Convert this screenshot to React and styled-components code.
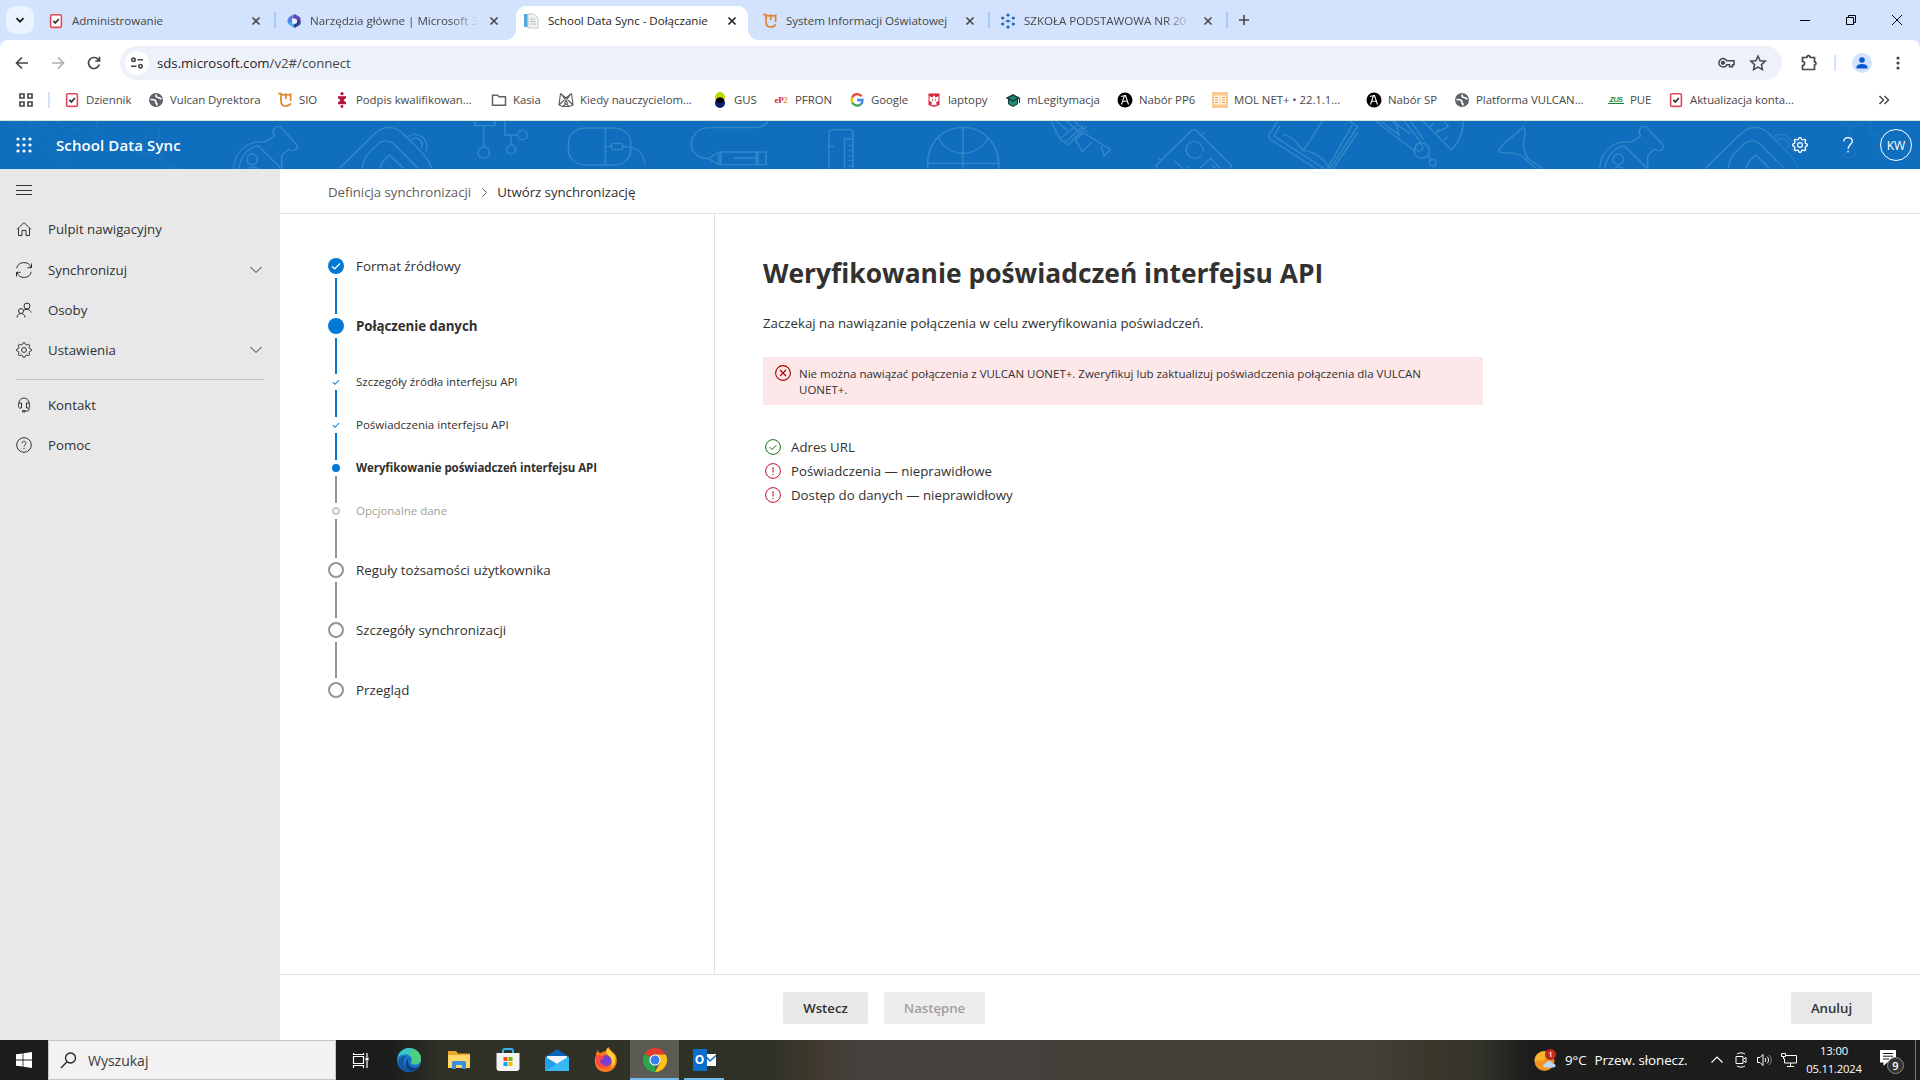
import styled, { createGlobalStyle } from "styled-components";

const GlobalStyle = createGlobalStyle`
  * {
    box-sizing: border-box;
  }
  body {
    margin: 0;
    background: #fff;
    overflow: hidden;
    font-family: "Segoe UI", "Open Sans", "Noto Sans", sans-serif;
    font-size: 13.25px;
    color: #323130;
  }
`;

const Screen = styled.div`
  width: 1920px;
  height: 1080px;
  display: flex;
  flex-direction: column;
`;

/* ---------- browser ---------- */

const TabStrip = styled.div`
  height: 40px;
  display: flex;
  align-items: center;
  background: #d3e3fd;
  padding-left: 6px;
`;

const TabSearch = styled.div`
  width: 28px;
  height: 28px;
  margin-right: 4px;
  border-radius: 10px;
  background: #ebf3fe;
  display: flex;
  align-items: center;
  justify-content: center;
`;

const Tab = styled.div`
  position: relative;
  width: 238px;
  height: 34px;
  margin-top: 6px;
  padding: 0 12px 5px 10px;
  display: flex;
  align-items: center;
  gap: 8px;
  font-size: 11.6px;
  color: ${(p) => (p.$active ? "#1f1f1f" : "#474747")};

  &::before {
    content: "";
    position: absolute;
    inset: 0 4px 0 2px;
    border-radius: 10px 10px 0 0;
    background: ${(p) => (p.$active ? "#fff" : "transparent")};
  }
  &::after {
    content: "";
    position: absolute;
    right: 0;
    top: 6px;
    width: 2px;
    height: 16px;
    background: ${(p) => (p.$divider ? "#a8c7fa" : "transparent")};
  }
  > * {
    position: relative;
  }
`;

/* concave foot of the active tab */
const TabFoot = styled.i`
  && {
    position: absolute;
  }
  bottom: 0;
  ${(p) => p.$side}: ${(p) => (p.$side === "left" ? "-8px" : "-6px")};
  width: 10px;
  height: 10px;
  background: radial-gradient(
    circle at ${(p) => (p.$side === "left" ? "0 0" : "100% 0")},
    transparent 9.5px,
    #fff 10px
  );
`;

const TabTitle = styled.span`
  flex: 1;
  overflow: hidden;
  white-space: nowrap;
  letter-spacing: -0.03px;
  ${(p) => p.$fade && "mask-image: linear-gradient(90deg, #000 84%, transparent 100%);"}
`;

const TabClose = styled.span`
  width: 16px;
  height: 16px;
  flex: none;
  display: flex;
  align-items: center;
  justify-content: center;
`;

const NewTab = styled.div`
  width: 32px;
  display: flex;
  justify-content: center;
`;

const WindowButtons = styled.div`
  margin-left: auto;
  display: flex;
`;

const WindowButton = styled.div`
  width: 46px;
  height: 34px;
  display: flex;
  align-items: center;
  justify-content: center;
`;

const ToolbarBack = styled.div`
  background: #d3e3fd;
`;

const Toolbar = styled.div`
  height: 46px;
  display: flex;
  align-items: center;
  background: #fff;
  border-radius: 8px 8px 0 0;
  padding: 0 4px;
`;

const ToolButton = styled.div`
  width: 36px;
  height: 34px;
  flex: none;
  display: flex;
  align-items: center;
  justify-content: center;
`;

const Omnibox = styled.div`
  width: 1662px;
  height: 34px;
  flex: none;
  margin: 0 9px 0 8px;
  border-radius: 17px;
  background: #edf1fa;
  display: flex;
  align-items: center;
  padding: 0 15px 0 5px;
`;

const SiteInfo = styled.div`
  width: 24px;
  height: 24px;
  border-radius: 50%;
  background: #fff;
  margin-right: 8px;
  display: flex;
  align-items: center;
  justify-content: center;
`;

const Url = styled.span`
  flex: 1;
  font-size: 13.2px;
  color: #474747;
  b {
    font-weight: 400;
    color: #1f1f1f;
  }
`;

const OmniActions = styled.div`
  display: flex;
  gap: 14px;
`;

const ToolDivider = styled.div`
  width: 2px;
  height: 16px;
  margin: 0 8px 0 7px;
  flex: none;
  background: #d3e3fd;
`;

const Profile = styled.div`
  width: 20px;
  height: 20px;
  margin: 0 8px;
  flex: none;
  border-radius: 50%;
  background: #d3e3fd;
  display: flex;
  align-items: center;
  justify-content: center;
`;

const BookmarkBar = styled.div`
  height: 35px;
  display: flex;
  align-items: center;
  padding: 0 0 7px 18px;
  background: #fff;
  border-bottom: 1px solid #d9dfd9;
  font-size: 11.4px;
  color: #474747;
  > * {
    flex: none;
  }
`;

const BookmarkDivider = styled.div`
  width: 2px;
  height: 16px;
  margin: 0 14px;
  background: #d3e3fd;
`;

const Bookmark = styled.div`
  width: ${(p) => p.$width}px;
  display: flex;
  align-items: center;
  gap: 6px;
  white-space: nowrap;
  letter-spacing: -0.04px;
  svg {
    flex: none;
  }
`;

/* ---------- application ---------- */

const SuiteHeader = styled.header`
  position: relative;
  height: 48px;
  display: flex;
  align-items: center;
  background: #0f6fbe;
  color: #fff;
`;

const PatternLayer = styled.svg`
  position: absolute;
  inset: 0;
`;

const Waffle = styled.div`
  position: relative;
  width: 48px;
  display: flex;
  justify-content: center;
`;

const SuiteTitle = styled.div`
  position: relative;
  flex: 1;
  padding-left: 8px;
  font-size: 15px;
  font-weight: 600;
  letter-spacing: 0.1px;
`;

const HeaderButton = styled.div`
  position: relative;
  width: 48px;
  display: flex;
  justify-content: center;
`;

const Avatar = styled.div`
  width: 32px;
  height: 32px;
  border: 1px solid #fff;
  border-radius: 50%;
  display: flex;
  align-items: center;
  justify-content: center;
  font-size: 12.2px;
  font-weight: 500;
`;

const Workspace = styled.div`
  height: 871px;
  display: flex;
`;

const Sidebar = styled.nav`
  width: 280px;
  background: #e8e8e8;
`;

const NavItem = styled.div`
  height: ${(p) => p.$height || 40}px;
  display: flex;
  align-items: center;
  gap: 16px;
  padding: 0 18px 0 16px;
  svg {
    flex: none;
  }
`;

const NavLabel = styled.span`
  flex: 1;
`;

const NavDivider = styled.div`
  height: 1px;
  margin: 9px 16px 5px;
  background: #c8c6c4;
`;

const Main = styled.main`
  flex: 1;
  display: flex;
  flex-direction: column;
`;

const Breadcrumb = styled.div`
  height: 45px;
  display: flex;
  align-items: center;
  gap: 8.5px;
  padding: 2px 0 0 48px;
  border-bottom: 1px solid #e1e1e1;
  color: #605e5c;
  letter-spacing: -0.03px;
  strong {
    font-weight: 400;
    color: #323130;
  }
`;

const Wizard = styled.div`
  flex: 1;
  display: flex;
`;

const Stepper = styled.div`
  width: 435px;
  padding: 44px 0 0 48px;
  border-right: 1px solid #e1e1e1;
`;

const Step = styled.div`
  display: flex;
  gap: 12px;
`;

const Rail = styled.div`
  width: 16px;
  display: flex;
  flex-direction: column;
  align-items: center;
`;

const Mark = styled.div`
  width: ${(p) => (p.$sub ? 8 : 16)}px;
  height: ${(p) => (p.$sub ? 8 : 16)}px;
  border-radius: 50%;
  display: flex;
  align-items: center;
  justify-content: center;
  background: ${(p) => (p.$state === "current" || (p.$state === "done" && !p.$sub) ? "#0078d4" : "transparent")};
  border: ${(p) => (p.$state === "todo" ? (p.$sub ? "2px solid #c8c8c8" : "2px solid #979593") : "none")};
  svg {
    flex: none;
  }
`;

const Connector = styled.div`
  width: 2px;
  height: ${(p) => p.$length}px;
  margin: 4px 0;
  background: ${(p) => (p.$done ? "#0078d4" : "#979593")};
`;

const StepLabel = styled.div`
  height: ${(p) => (p.$sub ? 6 : 16)}px;
  display: flex;
  align-items: center;
  white-space: nowrap;
  font-size: ${(p) => (p.$sub ? "11.5px" : "13.35px")};
  font-weight: ${(p) => (p.$bold ? 700 : 400)};
  letter-spacing: ${(p) => (p.$bold ? "-0.08px" : "0")};
  color: ${(p) => (p.$muted ? "#a19f9d" : "#323130")};
`;

const Content = styled.section`
  flex: 1;
  padding: 40px 0 0 48px;
`;

const Heading = styled.h1`
  margin: 0;
  font-size: 26.4px;
  line-height: 38px;
  font-weight: 700;
`;

const Lead = styled.p`
  margin: 21px 0 0;
  line-height: 20px;
`;

const ErrorBar = styled.div`
  width: 720px;
  height: 48px;
  margin-top: 24px;
  padding: 8px 50px 0 12px;
  display: flex;
  gap: 8px;
  background: #fde7e9;
  font-size: 11.5px;
  line-height: 16px;
  svg {
    flex: none;
  }
`;

const ErrorText = styled.span`
  padding-top: 1px;
`;

const CheckList = styled.ul`
  list-style: none;
  margin: 30px 0 0;
  padding: 0 0 0 2px;
`;

const CheckItem = styled.li`
  height: 24px;
  display: flex;
  align-items: center;
  gap: 10px;
`;

const Footer = styled.footer`
  height: 66px;
  display: flex;
  align-items: center;
  gap: 16px;
  padding: 0 48px 0 503px;
  border-top: 1px solid #e1e1e1;
`;

const Button = styled.button`
  width: ${(p) => p.$width}px;
  height: 32px;
  padding: 0;
  border: 0;
  border-radius: 2px;
  background: ${(p) => (p.disabled ? "#ededed" : "#e8e8e8")};
  color: ${(p) => (p.disabled ? "#a19f9d" : "#323130")};
  font-family: inherit;
  font-size: 13.2px;
  font-weight: 600;
  margin-left: ${(p) => (p.$end ? "auto" : "0")};
`;

/* ---------- taskbar ---------- */

const Taskbar = styled.div`
  height: 40px;
  display: flex;
  background: linear-gradient(
    90deg,
    #1c1c1c 0,
    #1c1c1c 390px,
    #303226 445px,
    #2f3126 770px,
    #3e382d 810px,
    #46403c 850px,
    #48423e 950px,
    #443f39 1100px,
    #453f3a 1370px,
    #3c372b 1430px,
    #34332a 1480px,
    #1d1d1c 1525px,
    #1c1c1c 1920px
  );
  color: #fff;
`;

const StartButton = styled.div`
  width: 48px;
  display: flex;
  align-items: center;
  justify-content: center;
`;

const SearchBox = styled.div`
  width: 288px;
  border: 1px solid #c4c4c4;
  background: #f2f2f2;
  display: flex;
  align-items: center;
  gap: 11px;
  padding-left: 11px;
  font-size: 14px;
  color: #3b3b3b;
`;

const TaskButton = styled.div`
  width: ${(p) => p.$width || 49}px;
  display: flex;
  align-items: center;
  justify-content: center;
  background: ${(p) => (p.$active ? "#5b5b54" : "transparent")};
  box-shadow: ${(p) => (p.$open ? "inset 0 -2px 0 #76b9ed" : "none")};
`;

const Tray = styled.div`
  margin-left: auto;
  display: flex;
  align-items: center;
`;

const Weather = styled.div`
  display: flex;
  align-items: center;
  gap: 8px;
  width: 171px;
  font-size: 13.4px;
  white-space: nowrap;
  letter-spacing: -0.1px;
`;

const TrayIcon = styled.div`
  width: 24px;
  display: flex;
  justify-content: center;
`;

const Clock = styled.div`
  width: 66px;
  text-align: center;
  font-size: 11.3px;
  line-height: 18px;
  letter-spacing: -0.2px;
`;

const Notifications = styled.div`
  position: relative;
  width: 48px;
  padding-left: 13px;
`;

const Badge = styled.span`
  position: absolute;
  left: 20px;
  top: 7px;
  width: 17px;
  height: 17px;
  border: 1px solid #8a8a8a;
  border-radius: 50%;
  background: #333;
  font-size: 11px;
  line-height: 15px;
  font-weight: 600;
  text-align: center;
`;

const ShowDesktop = styled.div`
  width: 5px;
  height: 40px;
  border-left: 1px solid #7a7a7a;
`;

/* ---------- icons ---------- */

const Line = ({ size = 16, box = 16, w = 1, color = "currentColor", children }) => (
  <svg width={size} height={size} viewBox={`0 0 ${box} ${box}`} fill="none" stroke={color} strokeWidth={w}>
    {children}
  </svg>
);

const Cross = ({ color = "#474747" }) => (
  <Line w={1.6} color={color}>
    <path d="M4.5 4.500l7 7M11.500 4.500l-7 7" />
  </Line>
);

const DziennikIcon = () => (
  <Line>
    <rect x="2.600" y="1.800" width="10.800" height="12.600" rx="1.500" fill="#fff" stroke="#e04a59" strokeWidth="1.600" />
    <path d="M5.400 7.800l2 2.200 3.400-4" stroke="#333" strokeWidth="1.800" />
  </Line>
);

const SioIcon = () => (
  <Line w={1.7} color="#e0842a">
    <path d="M1.300 1.700H4V9c0 3.300 1.600 5 4.700 5 2.500 0 4.200-.8 5-2.600M4 2.200c1.800 1 3.200.9 4.800 0 1.700.9 3.200.9 4.800 0V9M8.800 2.200V7" />
  </Line>
);

const GlobeIcon = () => (
  <Line>
    <circle cx="8" cy="8" r="7" fill="#5f6368" stroke="none" />
    <path d="M2.500 7.500c2.500 0 4 0 5 1s-.5 2 .5 2.500 1.500 1 .5 2.500M8.500 2.500c-1 2 0 3 1.500 3s2 1.200 3.500 1.500" stroke="#fff" strokeWidth="1.700" />
  </Line>
);

const M365Icon = () => (
  <svg width="16" height="16" viewBox="0 0 16 16">
    <path d="M8.500 1L4 3.500C2.500 4.500 1.500 6 1.500 8s1 3 2 3.500L6 10V5.500z" fill="#5a7fe8" />
    <path d="M8.500 1l4.500 2.500c1 .6 1.500 1.500 1.500 2.500v3L11 7 8 5.500 6 5.500z" fill="#6a45b8" />
    <path d="M14.500 8v2c0 1-.5 1.800-1.300 2.300L8.500 15 3.500 12c-1-.8-1.500-2-1.500-3l4 1.500h3z" fill="#3fb4e8" />
    <path d="M14.500 8v2c0 1-.5 1.800-1.300 2.300L8.500 15l-1-3 3.500-2V6z" fill="#3a3f8f" />
    <path d="M6 6l2.500-.8L11 7v2.500L8.500 11 6 9.700z" fill="#e4ebfb" />
  </svg>
);

const SdsIcon = () => (
  <svg width="16" height="16" viewBox="0 0 16 16">
    <path d="M4 1h6l4 4v10H4z" fill="#f1f3f4" stroke="#c3c9cc" />
    <path d="M6 6h5M6 8.500h6M6 11h6" stroke="#b9c0c4" />
    <rect x="0" y="1" width="3.500" height="13" fill="#55a7dc" />
  </svg>
);

const DotsIcon = () => (
  <svg width="16" height="16" viewBox="0 0 16 16" fill="#1b65b5">
    {[[8, 2], [8, 8], [8, 14], [2.700, 5], [13.300, 5], [2.700, 11], [13.300, 11], [5.300, 8], [10.700, 8]].map(([x, y], i) => (
      <circle key={i} cx={x} cy={y} r={i > 6 ? 0.6 : 1.6} />
    ))}
  </svg>
);

const PodpisIcon = () => (
  <svg width="16" height="16" viewBox="0 0 16 16" fill="#b5123b">
    <circle cx="8" cy="1.700" r="1.600" />
    <path d="M4 4.200h8V6L9.500 8.300 12 10.500v1.700H4v-1.700l2.500-2.200L4 6z" />
    <circle cx="8" cy="14.500" r="1.400" />
  </svg>
);

const FolderIcon = () => (
  <Line w={1.5} color="#5f6368">
    <path d="M1.500 3.200h5l1.500 1.600h6.500v8.500h-13z" />
  </Line>
);

const OwlIcon = () => (
  <Line w={1.1} color="#555">
    <path d="M2.500 1.500L8 6l5.500-4.500M2.500 1.500L1 13l3.500 1.500h7L15 13 13.500 1.500M1 13L8 6l7 7M4 3l6 8.500M12 3l-6 8.500M5 14.500l3-3 3 3" />
  </Line>
);

const GusIcon = () => (
  <svg width="16" height="16" viewBox="0 0 16 16">
    <circle cx="8" cy="5" r="5" fill="#c5d800" />
    <circle cx="8" cy="11" r="5" fill="#0b1f6f" />
    <path d="M3.500 8a5 5 0 0 1 9 0 5 5 0 0 1-9 0z" fill="#000" />
  </svg>
);

const GoogleIcon = () => (
  <svg width="16" height="16" viewBox="0 0 16 16" fill="none" strokeWidth="2.300">
    <path d="M12.600 4.200A5.500 5.500 0 0 0 3.200 5.500" stroke="#ea4335" />
    <path d="M3.200 5.500a5.500 5.500 0 0 0 0 5" stroke="#fbbc05" />
    <path d="M3.200 10.500a5.500 5.500 0 0 0 8.500 1.800" stroke="#34a853" />
    <path d="M8 8h5.500a5.500 5.500 0 0 1-1.800 4.300" stroke="#4285f4" />
  </svg>
);

const EagleIcon = () => (
  <svg width="16" height="16" viewBox="0 0 16 16">
    <path d="M2.500 1.500h11V13L8 15l-5.500-2z" fill="#d8213b" />
    <path d="M3.500 4L6.500 5.500 8 3l1.500 2.500 3-1.500v5L10 10.500l1 2-3 1-3-1 1-2L3.500 9z" fill="#fff" />
    <path d="M6.500 7v2M9.500 7v2" stroke="#d8213b" strokeWidth=".7" />
  </svg>
);

const CapIcon = () => (
  <svg width="16" height="16" viewBox="0 0 16 16">
    <path d="M3.500 7h9v5L8 14.500 3.500 12z" fill="#1f8f79" stroke="#12332e" />
    <path d="M8 2l7.500 4L8 10 .5 6z" fill="#16423b" />
    <path d="M4 6l4-2 4 2-4 2z" fill="#1f8f79" />
    <path d="M14.500 6v5" stroke="#12332e" />
  </svg>
);

const NaborIcon = () => (
  <svg width="16" height="16" viewBox="0 0 16 16">
    <circle cx="8" cy="8" r="7.500" fill="#000" />
    <path d="M4.500 12.500l3-9h1l3 9M6 9.200h4M4 4.500l3.500-1" fill="none" stroke="#fff" strokeWidth="1.100" />
  </svg>
);

const MolIcon = () => (
  <svg width="16" height="16" viewBox="0 0 16 16">
    <rect width="16" height="16" fill="#f8c88c" />
    <path d="M2 3.500h5.500v9H2zM8.500 3.500H14v9H8.500z" fill="#fff7ea" />
    <path d="M3 5.500h3M3 8h3M3 10.500h3M10 5.500h3M10 8h3M10 10.500h3" stroke="#e19a4e" />
  </svg>
);

const MiniText = styled.span`
  width: 16px;
  text-align: center;
  font: ${(p) => (p.$serif ? 'bold 9px "Liberation Serif", serif' : 'italic bold 7px "Liberation Sans", sans-serif')};
  letter-spacing: -0.4px;
  color: ${(p) => p.$color};
  border-bottom: ${(p) => (p.$serif ? "0" : "1px solid #0a8a3a")};
  i {
    font-style: normal;
    color: #f0932b;
  }
`;

const GearIcon = ({ size = 16, w = 1 }) => {
  const pts = [];
  for (let i = 0; i < 32; i++) {
    const r = i % 4 < 2 ? 7.4 : 5.7;
    const a = ((i - 0.5) / 32) * Math.PI * 2;
    pts.push(`${(8 + r * Math.cos(a)).toFixed(2)},${(8 + r * Math.sin(a)).toFixed(2)}`);
  }
  return (
    <Line size={size} w={w}>
      <polygon points={pts.join(" ")} strokeLinejoin="round" />
      <circle cx="8" cy="8" r="2.400" />
    </Line>
  );
};

const Chevron = () => (
  <Line size={12} box={12}>
    <path d="M.5 3l5.500 5.500L11.500 3" />
  </Line>
);

const HomeIcon = () => (
  <Line>
    <path d="M1 8.500L8 1.500l7 7M2.500 7.200v7.300h3.500V9.500h4v5h3.500V7.200" />
  </Line>
);

const SyncIcon = () => (
  <Line>
    <path d="M.7 6.200A7.500 7.500 0 0 1 15 5.500M15.500 1.500v4.200h-4M15.300 9.800A7.500 7.500 0 0 1 1 10.500M.5 14.500v-4.200h4" />
  </Line>
);

const PeopleIcon = () => (
  <Line>
    <circle cx="11" cy="4" r="3" />
    <path d="M8 8.200c2.500-1.800 6-.8 7.200 2.300" />
    <circle cx="5" cy="9" r="2.500" />
    <path d="M1 15.500c.3-5.300 7.700-5.300 8 0" />
  </Line>
);

const HeadsetIcon = () => (
  <Line>
    <path d="M3 7V6a5 5 0 0 1 10 0v1M3.500 6h2v5h-2C2 11 2 6 3.500 6zM12.500 6h-2v5h2c1.500 0 1.500-5 0-5zM13 10.500v2c0 1-.5 1.500-1.500 1.500H9" />
    <path d="M6.500 13.500h2.500v1.500H6.500z" />
  </Line>
);

const HelpIcon = () => (
  <Line>
    <circle cx="8" cy="8" r="7.300" />
    <path d="M6 6.300c0-2.600 4-2.600 4 0 0 1.500-2 1.700-2 3.300M8 11v1.200" />
  </Line>
);

const CheckMark = ({ color, size = 10 }) => (
  <Line size={size} box={10} w={1.3} color={color}>
    <path d="M1 5.200l2.700 2.700L9 2.500" />
  </Line>
);

const StatusIcon = ({ ok }) => (
  <Line color={ok ? "#0e700e" : "#c50f1f"}>
    <circle cx="8" cy="8" r="7.400" />
    {ok ? <path d="M4.800 8.200l2.300 2.300 4.200-4.300" /> : <path d="M8 4v5.500M8 10.800v1.300" />}
  </Line>
);

const ErrorIcon = () => (
  <Line color="#a80000" w={1.1}>
    <circle cx="8" cy="8" r="7.400" />
    <path d="M5 5l6 6M11 5l-6 6" />
  </Line>
);

/* school doodles repeated along the header, one tile is 1366px wide */
const Doodles = () => (
  <>
    <g transform="translate(0 -11) scale(.4082 .3333)">
      <path d="M572 177C575 120 610 90 648 97L673 78C662 58 680 40 690 55L728 105C730 122 718 126 706 118L690 137V177M585 177C590 130 615 110 633 108L690 177" />
      <ellipse cx="618" cy="148" rx="13" ry="16" />
      <path d="M608 177c5-8 18-8 24 0" />
      <path d="M830 177L915 75C940 45 965 45 988 72C1010 100 1050 140 1058 177M888 177C888 150 895 135 930 98C945 88 958 93 968 105L1025 177M932 177C930 160 945 145 955 135L990 177M1000 80C1020 60 1055 85 1043 127M1008 90C1020 75 1042 95 1032 115" />
      <path d="M1163 33V47H1212V33M1185 47V110M1237 33V75H1268M1252 75V104" />
      <ellipse cx="1185" cy="128" rx="14" ry="17" />
      <ellipse cx="1280" cy="75" rx="12" ry="14" />
      <ellipse cx="1252" cy="118" rx="11" ry="13" />
      <rect x="1393" y="54" width="152" height="111" rx="42" />
      <path d="M1483 54V165M1483 110H1498M1525 110C1555 108 1575 125 1580 160" />
      <rect x="1498" y="100" width="27" height="19" rx="5" />
    </g>
    <g transform="translate(640 -11) scale(.4082 .3333)">
      <path d="M314 33C310 45 295 53 280 53H165C115 60 110 145 168 146L193 126V164L168 146M198 126H285V164H198zM289 126H309V164H289zM230 144H285" />
      <path d="M463 177V68Q463 59 471 59H514Q522 59 522 68V177M501 177V87H522M463 109H475M511 106H522M511 121H522M511 137H522M511 152H522M511 168H522" />
      <path d="M705 177C700 100 740 52 791 52S882 100 879 177M791 52V177M705 160H879M731 84C760 145 822 145 853 84" />
      <path d="M1007 33C1012 55 1025 60 1018 70C1030 75 1025 85 1032 92C1045 90 1040 105 1048 105L1095 48M1020 33L1048 62M1045 33L1075 66M1064 33L1096 66M1030 85L1075 40M1040 98L1086 48M1066 90L1084 124L1108 96M1066 90L1086 68L1152 118L1137 138L1130 108" />
      <path d="M1265 177V165L1350 63Q1357 55 1364 63L1448 165V177M1268 142L1277 152M1383 67L1373 79M1308 152L1331 177M1340 177L1345 170M1370 177L1398 145L1422 177M1400 165L1412 177" />
      <path d="M1375 137C1355 160 1330 130 1340 108C1348 88 1375 88 1381 125" />
      <path d="M1563 33L1540 76Q1540 85 1546 90L1680 195M1568 48L1553 78L1700 195M1575 75C1605 80 1610 105 1625 122M1672 33L1625 122C1650 122 1680 150 1690 177M1738 33L1758 50L1690 177M1745 45L1683 177M1758 68L1698 177" />
      <path d="M1802 33L1900 125M1815 33L1860 76L1850 33M1842 33L1888 72M1872 33L1915 100M1888 33L1920 90" />
      <ellipse cx="1915" cy="122" rx="19" ry="23" />
      <ellipse cx="1908" cy="112" rx="9" ry="12" />
      <ellipse cx="1942" cy="158" rx="8" ry="10" />
      <path d="M1930 137L1938 149M1918 33L1987 120C2008 95 2018 60 2016 33M1935 50L1945 40M1950 68L1958 58M1950 68L1980 50L1970 33M1970 90L1978 80" />
      <path d="M2103 125C2100 110 2160 60 2163 52C2180 65 2150 100 2175 145L2212 177M2103 125C2130 135 2150 120 2170 150L2196 177M2175 145L2168 150" />
    </g>
  </>
);

const HeaderPattern = () => (
  <PatternLayer width="1920" height="48" viewBox="0 0 1920 48" fill="none" stroke="#398bcb">
    <defs>
      <linearGradient id="fade" x1="0" x2="1920" gradientUnits="userSpaceOnUse">
        <stop offset="0" stopColor="#fff" stopOpacity=".12" />
        <stop offset=".1" stopColor="#fff" stopOpacity=".2" />
        <stop offset=".13" stopColor="#fff" stopOpacity=".85" />
        <stop offset=".92" stopColor="#fff" stopOpacity=".85" />
        <stop offset=".94" stopColor="#fff" stopOpacity=".2" />
        <stop offset="1" stopColor="#fff" stopOpacity=".1" />
      </linearGradient>
      <mask id="edges" maskUnits="userSpaceOnUse" x="0" y="0" width="1920" height="48">
        <rect width="1920" height="48" fill="url(#fade)" />
      </mask>
    </defs>
    <g mask="url(#edges)" strokeWidth="3.800">
      <g transform="translate(-1366 0)"><Doodles /></g>
      <Doodles />
      <g transform="translate(1366 0)"><Doodles /></g>
    </g>
  </PatternLayer>
);

/* ---------- data ---------- */

const tabs = [
  { title: "Administrowanie", icon: <DziennikIcon />, divider: true },
  { title: "Narzędzia główne | Microsoft 365", icon: <M365Icon />, fade: true },
  { title: "School Data Sync - Dołączanie", icon: <SdsIcon />, active: true },
  { title: "System Informacji Oświatowej", icon: <SioIcon />, divider: true },
  { title: "SZKOŁA PODSTAWOWA NR 20", icon: <DotsIcon />, fade: true, divider: true },
];

const bookmarks = [
  { label: "Dziennik", icon: <DziennikIcon />, width: 84 },
  { label: "Vulcan Dyrektora", icon: <GlobeIcon />, width: 129 },
  { label: "SIO", icon: <SioIcon />, width: 57 },
  { label: "Podpis kwalifikowan...", icon: <PodpisIcon />, width: 157 },
  { label: "Kasia", icon: <FolderIcon />, width: 67 },
  { label: "Kiedy nauczycielom...", icon: <OwlIcon />, width: 154 },
  { label: "GUS", icon: <GusIcon />, width: 61 },
  { label: "PFRON", icon: <MiniText $serif $color="#d8262c">eP<i>2</i></MiniText>, width: 76 },
  { label: "Google", icon: <GoogleIcon />, width: 77 },
  { label: "laptopy", icon: <EagleIcon />, width: 79 },
  { label: "mLegitymacja", icon: <CapIcon />, width: 112 },
  { label: "Nabór PP6", icon: <NaborIcon />, width: 95 },
  { label: "MOL NET+ • 22.1.1...", icon: <MolIcon />, width: 154 },
  { label: "Nabór SP", icon: <NaborIcon />, width: 88 },
  { label: "Platforma VULCAN...", icon: <GlobeIcon />, width: 154 },
  { label: "PUE", icon: <MiniText $color="#0a8a3a">ZUS</MiniText>, width: 60 },
  { label: "Aktualizacja konta...", icon: <DziennikIcon />, width: 210 },
];

const steps = [
  { label: "Format źródłowy", state: "done", length: 36, done: true },
  { label: "Połączenie danych", state: "current", length: 36, done: true },
  { label: "Szczegóły źródła interfejsu API", state: "done", sub: true, length: 27, done: true },
  { label: "Poświadczenia interfejsu API", state: "done", sub: true, length: 27, done: true },
  { label: "Weryfikowanie poświadczeń interfejsu API", state: "current", sub: true, length: 27 },
  { label: "Opcjonalne dane", state: "todo", sub: true, muted: true, length: 39 },
  { label: "Reguły tożsamości użytkownika", state: "todo", length: 36 },
  { label: "Szczegóły synchronizacji", state: "todo", length: 36 },
  { label: "Przegląd", state: "todo" },
];

/* ---------- sections ---------- */

const Browser = () => (
  <>
    <TabStrip>
      <TabSearch>
        <Line size={10} box={10} w={1.8} color="#1f1f1f"><path d="M1.500 3.200L5 6.700l3.500-3.500" /></Line>
      </TabSearch>
      {tabs.map((t) => (
        <Tab key={t.title} $active={t.active} $divider={t.divider}>
          {t.active && <TabFoot $side="left" />}
          {t.active && <TabFoot $side="right" />}
          {t.icon}
          <TabTitle $fade={t.fade}>{t.title}</TabTitle>
          <TabClose><Cross color={t.active ? "#1f1f1f" : "#474747"} /></TabClose>
        </Tab>
      ))}
      <NewTab>
        <Line w={1.6} color="#474747"><path d="M3 8h10M8 3v10" /></Line>
      </NewTab>
      <WindowButtons>
        <WindowButton><Line size={10} box={10} color="#000"><path d="M0 5.500h10" /></Line></WindowButton>
        <WindowButton>
          <Line size={10} box={10} color="#000"><path d="M.5 2.500h7v7h-7zM2.500 2.500v-2h7v7h-2" /></Line>
        </WindowButton>
        <WindowButton><Line size={10} box={10} color="#000"><path d="M0 0l10 10M10 0L0 10" /></Line></WindowButton>
      </WindowButtons>
    </TabStrip>
    <ToolbarBack>
      <Toolbar>
        <ToolButton><Line w={1.7} color="#474747"><path d="M14 8H3M8 2.500L2.500 8 8 13.500" /></Line></ToolButton>
        <ToolButton><Line w={1.7} color="#b0b0b0"><path d="M2 8h11M8 2.500L13.500 8 8 13.500" /></Line></ToolButton>
        <ToolButton>
          <Line w={1.7} color="#474747"><path d="M13.300 9.500A5.500 5.500 0 1 1 12 4.200L13 5.500M13.500 1.800v4.200H9.300" /></Line>
        </ToolButton>
        <Omnibox>
          <SiteInfo>
            <Line w={1.6} color="#474747">
              <circle cx="4.500" cy="4.800" r="1.700" /><path d="M8.500 4.800H14M2 11.200h5.500" /><circle cx="11.500" cy="11.200" r="1.700" />
            </Line>
          </SiteInfo>
          <Url><b>sds.microsoft.com</b>/v2#/connect</Url>
          <OmniActions>
            <Line size={18} box={18} w={1.5} color="#474747">
              <path d="M9.800 6.800H17v4h-1.500v2h-3v-2H9.800a4.200 4.200 0 1 1 0-4z" />
              <circle cx="6" cy="8.800" r="1.400" fill="#474747" />
            </Line>
            <Line size={18} box={18} w={1.5} color="#474747">
              <path d="M9 2l2.100 4.700 5.100.5-3.800 3.400 1.100 5L9 13l-4.500 2.600 1.100-5L1.800 7.200l5.100-.5z" />
            </Line>
          </OmniActions>
        </Omnibox>
        <ToolButton>
          <Line size={18} box={18} w={1.7} color="#474747">
            <path d="M2.500 3.500h4.300c0-2.400 3.400-2.400 3.400 0h4.300v4.300c2 0 2 3.200 0 3.200v4.500h-12v-4c2.800 0 2.800-4 0-4z" />
          </Line>
        </ToolButton>
        <ToolDivider />
        <Profile>
          <svg width="14" height="14" viewBox="0 0 14 14" fill="#0b57d0"><circle cx="7" cy="4" r="2.800" /><path d="M1.500 12.500V11c0-4 11-4 11 0v1.500z" /></svg>
        </Profile>
        <ToolButton>
          <svg width="4" height="16" fill="#474747"><circle cx="2" cy="3" r="1.600" /><circle cx="2" cy="8" r="1.600" /><circle cx="2" cy="13" r="1.600" /></svg>
        </ToolButton>
      </Toolbar>
    </ToolbarBack>
    <BookmarkBar>
      <Line w={1.7} color="#474747">
        <path d="M2 2h4v4H2zM10 2h4v4h-4zM2 10h4v4H2zM10 10h4v4h-4z" />
      </Line>
      <BookmarkDivider />
      {bookmarks.map((b) => (
        <Bookmark key={b.label} $width={b.width}>{b.icon}{b.label}</Bookmark>
      ))}
      <Line size={12} box={12} w={1.5} color="#474747"><path d="M1.500 2l4 4-4 4M6.500 2l4 4-4 4" /></Line>
    </BookmarkBar>
  </>
);

const Header = () => (
  <SuiteHeader>
    <HeaderPattern />
    <Waffle>
      <svg width="16" height="16" fill="#fff">
        {[0, 1, 2].map((r) => [0, 1, 2].map((c) => <circle key={`${r}${c}`} cx={2 + c * 6} cy={2 + r * 6} r="1.600" />))}
      </svg>
    </Waffle>
    <SuiteTitle>School Data Sync</SuiteTitle>
    <HeaderButton><GearIcon w={1.3} /></HeaderButton>
    <HeaderButton>
      <Line w={1.3}><path d="M3.800 4.500C3.800-.8 12.300-.5 12.300 4.300 12.300 7.500 8 7.500 8 12M8 13.800v1.700" /></Line>
    </HeaderButton>
    <HeaderButton><Avatar>KW</Avatar></HeaderButton>
  </SuiteHeader>
);

const Navigation = () => (
  <Sidebar>
    <NavItem>
      <Line><path d="M0 4.500h16M0 9.500h16M0 13.500h16" /></Line>
    </NavItem>
    <NavItem><HomeIcon /><NavLabel>Pulpit nawigacyjny</NavLabel></NavItem>
    <NavItem $height={41}><SyncIcon /><NavLabel>Synchronizuj</NavLabel><Chevron /></NavItem>
    <NavItem $height={39}><PeopleIcon /><NavLabel>Osoby</NavLabel></NavItem>
    <NavItem $height={41}><GearIcon /><NavLabel>Ustawienia</NavLabel><Chevron /></NavItem>
    <NavDivider />
    <NavItem><HeadsetIcon /><NavLabel>Kontakt</NavLabel></NavItem>
    <NavItem><HelpIcon /><NavLabel>Pomoc</NavLabel></NavItem>
  </Sidebar>
);

const StepList = () => (
  <Stepper>
    {steps.map((s) => (
      <Step key={s.label}>
        <Rail>
          <Mark $sub={s.sub} $state={s.state}>
            {s.state === "done" && <CheckMark size={s.sub ? 8 : 10} color={s.sub ? "#0078d4" : "#fff"} />}
          </Mark>
          {s.length && <Connector $length={s.length} $done={s.done} />}
        </Rail>
        <StepLabel $sub={s.sub} $muted={s.muted} $bold={s.state === "current"}>{s.label}</StepLabel>
      </Step>
    ))}
  </Stepper>
);

const Verification = () => (
  <Content>
    <Heading>Weryfikowanie poświadczeń interfejsu API</Heading>
    <Lead>Zaczekaj na nawiązanie połączenia w celu zweryfikowania poświadczeń.</Lead>
    <ErrorBar>
      <ErrorIcon />
      <ErrorText>
        Nie można nawiązać połączenia z VULCAN UONET+. Zweryfikuj lub zaktualizuj poświadczenia połączenia dla VULCAN
        UONET+.
      </ErrorText>
    </ErrorBar>
    <CheckList>
      <CheckItem><StatusIcon ok />Adres URL</CheckItem>
      <CheckItem><StatusIcon />Poświadczenia — nieprawidłowe</CheckItem>
      <CheckItem><StatusIcon />Dostęp do danych — nieprawidłowy</CheckItem>
    </CheckList>
  </Content>
);

const EdgeIcon = () => (
  <svg width="26" height="26" viewBox="0 0 26 26">
    <circle cx="13" cy="13" r="12" fill="#1b78c8" />
    <path d="M1.500 11C3 3.500 9 1 13 1c8 0 12 6 12 10.500 0 4-3 6-6 6-2.500 0-4-1-4-2 0-.8 1-1.200 1-3C16 9.500 12.500 7.500 9 7.500c-3.500 0-6 1.500-7.500 3.500z" fill="#38c6c0" />
    <path d="M16 2c6 1 9 5.500 9 9.500 0 4-3 6-6 6-2.500 0-4-1-4-2 0-.8 1-1.200 1-3 0-2-1-3.500-3-4.500z" fill="#56d364" opacity=".7" />
    <path d="M10 9c-3 3-3 8 0 12 2 2.500 5 4 8 3-5 2.500-11 1-14-3s-2-12 6-12z" fill="#1257a4" />
    <path d="M13 11c-2 3-1 8 4 9.500 2 .5 4.500 0 6-1-2 4-6 5.500-9 4.500-5-2-6-10-1-13z" fill="#0c3f86" />
  </svg>
);

const ExplorerIcon = () => (
  <svg width="24" height="24" viewBox="0 0 24 24">
    <path d="M1 3h8l2 2.500h12V20H1z" fill="#e8a92a" />
    <path d="M1 7h22v13H1z" fill="#ffd869" />
    <path d="M5 21v-6.500q0-1.500 1.500-1.500h11q1.500 0 1.500 1.500V21h-4v-4H9v4z" fill="#3b8ede" />
  </svg>
);

const StoreIcon = () => (
  <svg width="26" height="26" viewBox="0 0 26 26">
    <path d="M8 6V4q0-2 2-2h6q2 0 2 2v2" fill="none" stroke="#35b4ee" strokeWidth="2" />
    <path d="M1.500 6h23v15q0 3-3 3h-17q-3 0-3-3z" fill="#f3f3f3" />
    <path d="M8.500 10h4v4h-4z" fill="#f25022" /><path d="M13.500 10h4v4h-4z" fill="#7fba00" />
    <path d="M8.500 15h4v4h-4z" fill="#00a4ef" /><path d="M13.500 15h4v4h-4z" fill="#ffb900" />
  </svg>
);

const MailIcon = () => (
  <svg width="24" height="24" viewBox="0 0 24 24">
    <path d="M0 9L12 1l12 8v13H0z" fill="#0a64b8" />
    <path d="M2 8h20v8H2z" fill="#f2f6fa" />
    <path d="M0 8.500L12 16l12-7.500V23H0z" fill="#1f9fe6" />
    <path d="M24 8.500V23H0z" fill="#35b8f3" />
  </svg>
);

const FirefoxIcon = () => (
  <svg width="26" height="26" viewBox="0 0 26 26">
    <path d="M3 8c0-2 1-4 2-5 0 2 1 3 3 3 1-1 3-2 5-2 0-2 1-3 3-4 0 3 5 5 7 9 3 7-2 16-10 16S1 19 2 12z" fill="#ff7a1c" />
    <path d="M15 1c1 3 6 5 7 9 1 5-1 9-4 11 3-7-1-12-5-15 0-2 1-4 2-5z" fill="#ffd23a" />
    <circle cx="12.500" cy="14" r="6" fill="#7a3fd0" />
    <path d="M3 8c4 0 7 1 9 3-3 0-4 1-5 3 1 4 5 6 10 4-3 5-12 5-14-2z" fill="#ff4b3a" />
  </svg>
);

const ChromeIcon = () => (
  <svg width="24" height="24" viewBox="0 0 24 24">
    <path d="M12 12L1.600 6a12 12 0 0 1 20.800 0z" fill="#e33b2e" />
    <path d="M12 12v12A12 12 0 0 1 1.600 6z" fill="#2da44e" />
    <path d="M12 6.500h10.700A12 12 0 0 1 12 24l5-9z" fill="#fbc116" />
    <circle cx="12" cy="12" r="5.600" fill="#fff" /><circle cx="12" cy="12" r="4.500" fill="#3b7ded" />
  </svg>
);

const OutlookLetter = styled.span`
  width: 14px;
  height: 22px;
  background: #0a6fc9;
  font-size: 12px;
  font-weight: 700;
  line-height: 22px;
  text-align: center;
`;

const OutlookIcon = () => (
  <>
    <OutlookLetter>O</OutlookLetter>
    <svg width="9" height="12" viewBox="0 0 9 12"><path d="M0 0h9v12H0z" fill="#fff" /><path d="M0 3.500l3 3.500 6-5.500" fill="none" stroke="#0a6fc9" strokeWidth="1.500" /></svg>
  </>
);

const WindowsBar = () => (
  <Taskbar>
    <StartButton>
      <svg width="16" height="16" viewBox="0 0 16 16" fill="#fff"><path d="M0 2.300l6.600-.9v6.200H0zM7.400 1.300L16 0v7.600H7.400zM0 8.400h6.600v6.200L0 13.700zM7.400 8.400H16V16l-8.600-1.200z" /></svg>
    </StartButton>
    <SearchBox>
      <Line size={17} box={17} w={1.3} color="#222"><circle cx="10.500" cy="6" r="5" /><path d="M7 9.800L1 16" /></Line>
      Wyszukaj
    </SearchBox>
    <TaskButton $width={48}>
      <Line size={17} box={17} color="#fff" w={1.2}>
        <path d="M1.500 4.500h10v7h-10zM1.500 3v-2M11.500 3v-2M1.500 2.500h10M1.500 13v3M11.500 13v3M1.500 13.500h10M15 1v4M15 9v7" /><path d="M13.500 5.500h3v3h-3z" fill="#fff" stroke="none" />
      </Line>
    </TaskButton>
    <TaskButton $width={50}><EdgeIcon /></TaskButton>
    <TaskButton><ExplorerIcon /></TaskButton>
    <TaskButton><StoreIcon /></TaskButton>
    <TaskButton><MailIcon /></TaskButton>
    <TaskButton><FirefoxIcon /></TaskButton>
    <TaskButton $active $open><ChromeIcon /></TaskButton>
    <TaskButton $width={5} />
    <TaskButton $width={40} $open><OutlookIcon /></TaskButton>
    <Tray>
      <Weather>
        <svg width="23" height="23" viewBox="0 0 23 23">
          <circle cx="10.500" cy="12" r="10" fill="#f0941f" />
          <path d="M.5 12a10 10 0 0 1 14-9l-4 8z" fill="#f7b52c" />
          <path d="M11 18.500c-2.500 0-2.500-4 .5-4 1-3.500 6-3.500 7 0 4 0 4 4 1 4z" fill="#bcd8f8" />
          <circle cx="16.500" cy="5.500" r="5.500" fill="#c42b1c" />
          <path d="M15.500 4l1.300-1v5" fill="none" stroke="#fff" />
        </svg>
        <span>9°C</span>
        <span>Przew. słonecz.</span>
      </Weather>
      <TrayIcon><Line size={12} box={12} w={1.2} color="#fff"><path d="M.5 8.500L6 3l5.500 5.500" /></Line></TrayIcon>
      <TrayIcon>
        <Line color="#fff"><path d="M3 4.500h7v7H3zM10.500 7l2.500-1.500v5L10.500 9M4 2c2-1.500 6-1.500 8 0M4 14c2 1.500 6 1.500 8 0" /></Line>
      </TrayIcon>
      <TrayIcon>
        <Line color="#fff"><path d="M.5 5.500h2.500L6 2.500v11L3 10.500H.5zM8 6c1 1 1 3 0 4M10 4.500c2 2 2 5 0 7" /><path d="M12 3c3 3 3 7 0 10" stroke="#888" /></Line>
      </TrayIcon>
      <TrayIcon>
        <Line color="#fff"><path d="M5 3.500h10.500v7.500H3.500V6.500M9.500 11v3M6 14.500h7M.5 1.500h4v3h-4zM2.500 4.500v2.500" /></Line>
      </TrayIcon>
      <Clock>13:00<br />05.11.2024</Clock>
      <Notifications>
        <svg width="16" height="16" viewBox="0 0 16 16" fill="#fff"><path d="M0 0h16v12.500H7L3.500 16v-3.500H0z" /><path d="M3 3.500h10M3 6.200h10M3 9h6" stroke="#1c1c1c" /></svg>
        <Badge>9</Badge>
      </Notifications>
      <ShowDesktop />
    </Tray>
  </Taskbar>
);

export default function App() {
  return (
    <Screen>
      <GlobalStyle />
      <Browser />
      <Header />
      <Workspace>
        <Navigation />
        <Main>
          <Breadcrumb>
            Definicja synchronizacji
            <Line size={9} box={9}><path d="M2.500.5l4 4-4 4" /></Line>
            <strong>Utwórz synchronizację</strong>
          </Breadcrumb>
          <Wizard>
            <StepList />
            <Verification />
          </Wizard>
          <Footer>
            <Button $width={85}>Wstecz</Button>
            <Button $width={101} disabled>Następne</Button>
            <Button $width={81} $end>Anuluj</Button>
          </Footer>
        </Main>
      </Workspace>
      <WindowsBar />
    </Screen>
  );
}
